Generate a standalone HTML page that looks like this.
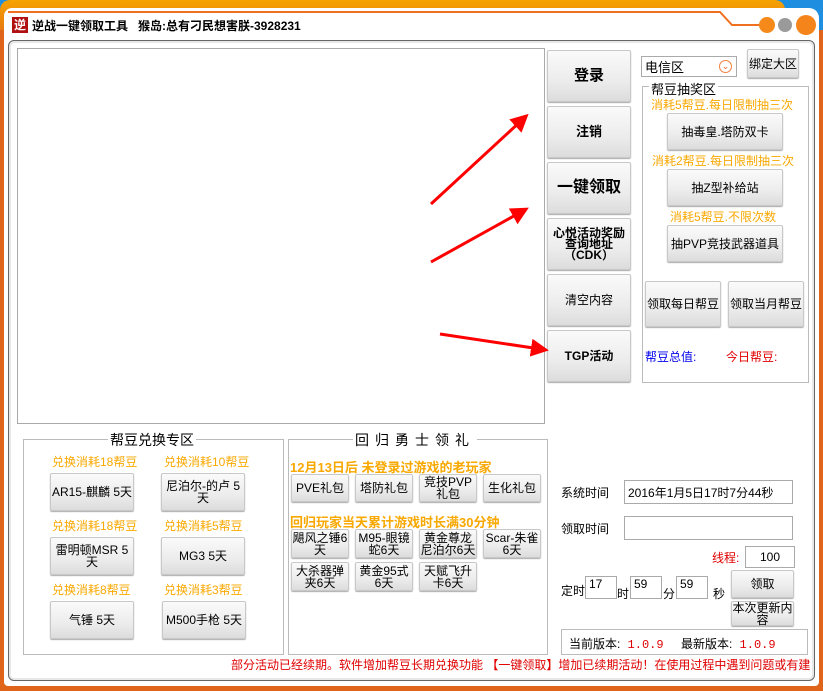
<!DOCTYPE html>
<html><head><meta charset="utf-8"><style>
*{box-sizing:border-box;margin:0;padding:0}
body{width:823px;height:691px;overflow:hidden;background:#1e8fe0;font-family:"Liberation Sans","Noto Sans CJK SC","WenQuanYi Zen Hei",sans-serif;font-size:12px;position:relative}
.a{position:absolute}
.win{left:0;top:0;width:785px;height:691px;background:linear-gradient(#f6a300,#e87a10 30px,#e0651a);border-radius:10px 10px 0 0}
.win2{left:0;top:30px;width:823px;height:661px;background:#e0651a}
.inner{left:4px;top:8px;width:815px;height:678px;background:#fff;border-radius:8px 10px 4px 4px}
.panel{left:8px;top:40px;width:807px;height:641px;border:1px solid #666;border-radius:6px;background:#fff;box-shadow:inset 0 0 0 2px #e8e8e8}
.btn{position:absolute;background:linear-gradient(#fafafa,#ececec 60%,#dcdcdc);border:1px solid #c8c8c8;border-radius:2px;box-shadow:0 1px 1px #aaa;display:flex;align-items:center;justify-content:center;text-align:center;color:#000;line-height:12px;font-size:12px}
.big{font-weight:bold;font-size:15px}
.grp{position:absolute;border:1px solid #bbb}
.gt{position:absolute;background:#fff;padding:0 2px;font-size:14px;top:-10px}
.or{position:absolute;color:#f9a800;font-size:12px}
.inp{position:absolute;border:1px solid #aaa;background:#fff;font-size:12px;padding-left:3px;display:flex;align-items:center}
</style></head><body>
<div class="a win"></div>
<div class="a win2"></div>
<div class="a inner"></div>
<svg class="a" style="left:0;top:0" width="823" height="40"><polyline points="8,12 720,12 732,25 770,25" fill="none" stroke="#f07020" stroke-width="2"/>
<circle cx="767" cy="25" r="8" fill="#f58a1a"/><circle cx="785" cy="25" r="7" fill="#9a9a9a"/><circle cx="806" cy="25" r="10" fill="#f5851a"/></svg>
<div class="a" style="left:12px;top:17px;width:16px;height:16px;background:#b01010;color:#fff;font-size:12px;line-height:16px;text-align:center;font-weight:bold">逆</div>
<div class="a" style="left:32px;top:17px;font-size:12px;font-weight:bold;color:#000">逆战一键领取工具 &nbsp; 猴岛:总有刁民想害朕-3928231</div>
<div class="a panel"></div>
<div class="a" style="left:17px;top:48px;width:528px;height:376px;border:1px solid #aaa"></div>

<div class="btn big" style="left:547px;top:50px;width:84px;height:52px">登录</div>
<div class="btn big" style="left:547px;top:106px;width:84px;height:52px;font-size:13px">注销</div>
<div class="btn big" style="left:547px;top:162px;width:84px;height:52px;font-size:16px">一键领取</div>
<div class="btn" style="left:547px;top:218px;width:84px;height:52px;font-weight:bold;font-size:12px;line-height:11px">心悦活动奖励<br>查询地址<br>（CDK）</div>
<div class="btn" style="left:547px;top:274px;width:84px;height:52px">清空内容</div>
<div class="btn" style="left:547px;top:330px;width:84px;height:52px;font-weight:bold">TGP活动</div>

<div class="inp" style="left:641px;top:56px;width:96px;height:21px;font-size:13px">电信区<span style="position:absolute;right:4px;top:3px;width:13px;height:13px;border-radius:50%;border:1px solid #f08040;color:#f06020;font-size:9px;line-height:11px;text-align:center">⌄</span></div>
<div class="btn" style="left:747px;top:49px;width:52px;height:29px">绑定大区</div>
<div class="grp" style="left:642px;top:86px;width:167px;height:297px"><div class="gt" style="left:6px;top:-8px;font-size:13px">帮豆抽奖区</div></div>
<div class="or" style="left:651px;top:96px">消耗5帮豆.每日限制抽三次</div>
<div class="btn" style="left:667px;top:113px;width:116px;height:37px">抽毒皇.塔防双卡</div>
<div class="or" style="left:652px;top:152px">消耗2帮豆.每日限制抽三次</div>
<div class="btn" style="left:667px;top:169px;width:116px;height:37px">抽Z型补给站</div>
<div class="or" style="left:670px;top:208px">消耗5帮豆.不限次数</div>
<div class="btn" style="left:667px;top:225px;width:116px;height:37px">抽PVP竞技武器道具</div>
<div class="btn" style="left:645px;top:281px;width:76px;height:46px">领取每日帮豆</div>
<div class="btn" style="left:728px;top:281px;width:76px;height:46px">领取当月帮豆</div>
<div class="a" style="left:645px;top:348px;color:#0000ee;font-size:12px">帮豆总值:</div>
<div class="a" style="left:726px;top:348px;color:#e00000;font-size:12px">今日帮豆:</div>

<div class="grp" style="left:23px;top:439px;width:261px;height:216px"><div class="gt" style="left:84px">帮豆兑换专区</div></div>
<div class="or" style="left:52px;top:453px">兑换消耗18帮豆</div><div class="or" style="left:164px;top:453px">兑换消耗10帮豆</div>
<div class="btn" style="left:50px;top:473px;width:84px;height:38px">AR15-麒麟 5天</div>
<div class="btn" style="left:161px;top:473px;width:84px;height:38px">尼泊尔-的卢 5天</div>
<div class="or" style="left:52px;top:517px">兑换消耗18帮豆</div><div class="or" style="left:164px;top:517px">兑换消耗5帮豆</div>
<div class="btn" style="left:50px;top:537px;width:84px;height:38px">雷明顿MSR 5天</div>
<div class="btn" style="left:161px;top:537px;width:84px;height:38px">MG3 5天</div>
<div class="or" style="left:52px;top:581px">兑换消耗8帮豆</div><div class="or" style="left:164px;top:581px">兑换消耗3帮豆</div>
<div class="btn" style="left:50px;top:601px;width:84px;height:38px">气锤 5天</div>
<div class="btn" style="left:162px;top:601px;width:84px;height:38px">M500手枪 5天</div>

<div class="grp" style="left:288px;top:439px;width:260px;height:216px"><div class="gt" style="left:64px;letter-spacing:6px">回归勇士领礼</div></div>
<div class="a" style="left:290px;top:457px;color:#f9a800;font-weight:bold;font-size:13px">12月13日后 未登录过游戏的老玩家</div>
<div class="btn" style="left:291px;top:474px;width:58px;height:28px">PVE礼包</div>
<div class="btn" style="left:355px;top:474px;width:58px;height:28px">塔防礼包</div>
<div class="btn" style="left:419px;top:474px;width:58px;height:28px">竞技PVP礼包</div>
<div class="btn" style="left:483px;top:474px;width:58px;height:28px">生化礼包</div>
<div class="a" style="left:290px;top:512px;color:#f9a800;font-weight:bold;font-size:13px">回归玩家当天累计游戏时长满30分钟</div>
<div class="btn" style="left:291px;top:529px;width:58px;height:29px">飓风之锤6天</div>
<div class="btn" style="left:355px;top:529px;width:58px;height:29px">M95-眼镜蛇6天</div>
<div class="btn" style="left:419px;top:529px;width:58px;height:29px">黄金尊龙尼泊尔6天</div>
<div class="btn" style="left:483px;top:529px;width:58px;height:29px">Scar-朱雀6天</div>
<div class="btn" style="left:291px;top:562px;width:58px;height:29px">大杀器弹夹6天</div>
<div class="btn" style="left:355px;top:562px;width:58px;height:29px">黄金95式6天</div>
<div class="btn" style="left:419px;top:562px;width:58px;height:29px">天赋飞升卡6天</div>

<div class="a" style="left:561px;top:484px;font-size:12px">系统时间</div>
<div class="inp" style="left:624px;top:480px;width:169px;height:24px">2016年1月5日17时7分44秒</div>
<div class="a" style="left:561px;top:520px">领取时间</div>
<div class="inp" style="left:624px;top:516px;width:169px;height:24px"></div>
<div class="a" style="left:712px;top:549px;color:#e00000">线程:</div>
<div class="inp" style="left:745px;top:546px;width:50px;height:22px;justify-content:center;padding:0">100</div>
<div class="a" style="left:561px;top:582px">定时</div>
<div class="inp" style="left:585px;top:576px;width:32px;height:23px;align-items:flex-start">17</div>
<div class="a" style="left:617px;top:585px">时</div>
<div class="inp" style="left:630px;top:576px;width:32px;height:23px;align-items:flex-start">59</div>
<div class="a" style="left:663px;top:585px">分</div>
<div class="inp" style="left:676px;top:576px;width:32px;height:23px;align-items:flex-start">59</div>
<div class="a" style="left:713px;top:585px">秒</div>
<div class="btn" style="left:731px;top:570px;width:63px;height:28px">领取</div>
<div class="btn" style="left:731px;top:601px;width:63px;height:25px">本次更新内容</div>
<div class="a" style="left:561px;top:629px;width:247px;height:26px;border:1px solid #bbb"></div>
<div class="a" style="left:569px;top:635px">当前版本:<span style="color:#e00000;font-family:'Liberation Mono',monospace"> 1.0.9</span></div>
<div class="a" style="left:681px;top:635px">最新版本:<span style="color:#e00000;font-family:'Liberation Mono',monospace"> 1.0.9</span></div>
<div class="a" style="left:231px;top:656px;width:580px;overflow:hidden;white-space:nowrap;color:#e00000;font-size:12px">部分活动已经续期。软件增加帮豆长期兑换功能 【一键领取】增加已续期活动！在使用过程中遇到问题或有建议</div>

<svg class="a" style="left:0;top:0" width="823" height="691">
<defs><marker id="m" markerWidth="6" markerHeight="6" refX="3" refY="3" orient="auto"><path d="M0,0 L6,3 L0,6z" fill="#f00"/></marker></defs>
<line x1="431" y1="204" x2="522" y2="120" stroke="#f00" stroke-width="3" marker-end="url(#m)"/>
<line x1="431" y1="262" x2="521" y2="212" stroke="#f00" stroke-width="3" marker-end="url(#m)"/>
<line x1="440" y1="334" x2="540" y2="349" stroke="#f00" stroke-width="3" marker-end="url(#m)"/>
</svg>
</body></html>
